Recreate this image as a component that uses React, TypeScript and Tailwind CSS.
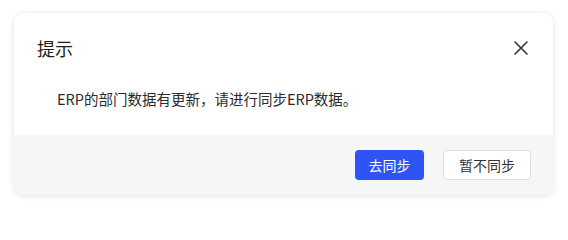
export default function App() {
  return (
    <div
      className="w-[568px] h-[211px] bg-white pt-[13px] pl-[14px]"
      style={{ fontFamily: '"Noto Sans CJK SC", "Noto Sans", sans-serif' }}
    >
      <div className="w-[539px] h-[182px] rounded-[10px] bg-white shadow-[0_1px_6px_rgba(0,0,0,0.12)] overflow-hidden flex flex-col">
        <div className="h-[122px] flex flex-col">
          <div className="flex items-center justify-between pl-[23px] pr-[25px] pt-[23px]">
            <span className="text-[18px] leading-[24px] text-[#1f1f1f]">提示</span>
            <svg width="14" height="14" viewBox="0 0 14 14" fill="none">
              <path d="M1 1L13 13M13 1L1 13" stroke="#333" strokeWidth="1.6" strokeLinecap="round" />
            </svg>
          </div>
          <p className="pl-[43px] mt-[29px] text-[14.5px] leading-[20px] text-[#2b2b2b]">
            ERP的部门数据有更新，请进行同步ERP数据。
          </p>
        </div>
        <div className="flex-1 bg-[#f5f6f8] flex items-center justify-end gap-[19px] pr-[22px]">
          <button className="w-[69px] h-[30px] rounded-[4px] bg-[#2f54f5] text-white text-[14px]">
            去同步
          </button>
          <button className="w-[88px] h-[30px] rounded-[4px] bg-white border border-[#dcdfe6] text-[#333] text-[14px]">
            暂不同步
          </button>
        </div>
      </div>
    </div>
  );
}
